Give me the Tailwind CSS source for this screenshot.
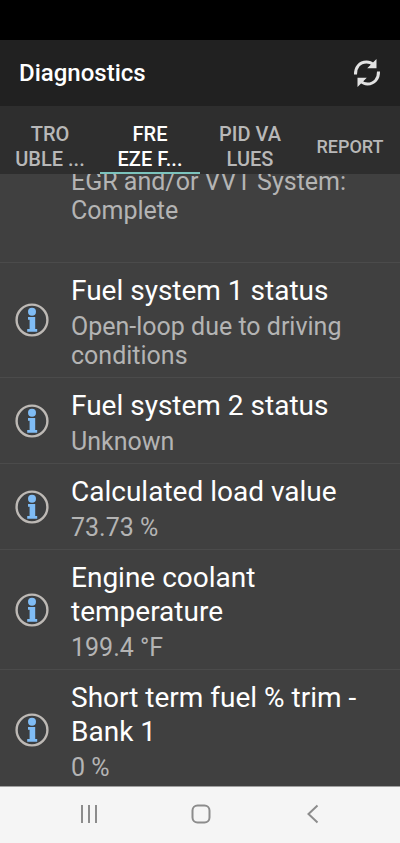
<!DOCTYPE html>
<html lang="en">
<head>
<meta charset="utf-8">
<meta name="viewport" content="width=device-width, initial-scale=1">
<title>Diagnostics</title>
<script src="https://cdn.jsdelivr.net/npm/@tailwindcss/browser@4"></script>
</head>
<body class="flex h-screen flex-col overflow-hidden bg-[#404040] font-['Roboto',sans-serif] text-white">
<svg class="hidden" aria-hidden="true">
  <symbol id="info" viewBox="0 0 34 34">
    <circle cx="17" cy="17" r="15.400" fill="#3c3e40" stroke="#bdb9b5" stroke-width="2.400"/>
    <circle cx="17" cy="8.800" r="4" fill="#7fbcf5"/>
    <path d="M13 14h7.200v12h2v2.800H12.200v-2.800h2.400v-9.200H13z" fill="#7fbcf5"/>
  </symbol>
</svg>

<div class="h-10 shrink-0 bg-black"></div>

<header class="flex h-[66px] shrink-0 items-center justify-between bg-[#212121] px-[19px]">
  <h1 class="text-[24px] leading-[28px] font-medium">Diagnostics</h1>
  <button aria-label="Refresh">
    <svg class="size-7" viewBox="0 0 28 28" fill="none" stroke="#e2e2e2" stroke-width="3">
      <path d="M2.500 15.500C2.200 8.500 6.500 3 13.500 3c2.600 0 5 .9 6.800 2.700"/>
      <path d="M25.500 12.500C25.800 19.500 21.500 25 14.500 25c-2.600 0-5-.9-6.800-2.700"/>
      <path d="M23.500 0v9.300h-9.300zM4.500 28v-9.300h9.300z" fill="#e2e2e2" stroke="none"/>
    </svg>
  </button>
</header>

<nav class="grid h-[68px] shrink-0 grid-cols-4 bg-[#2e2e2e] text-[20px] leading-[25px] font-medium text-[#b8b8b8]" aria-label="Sections">
  <button class="border-b-2 border-transparent pt-[15px]">TRO<br>UBLE ...</button>
  <button class="border-b-2 border-[#7cc4bd] pt-[15px] text-white" aria-current="page">FRE<br>EZE F...</button>
  <button class="border-b-2 border-transparent pt-[15px]">PID VA<br>LUES</button>
  <button class="border-b-2 border-transparent pt-[15px] text-[18px]">REPORT</button>
</nav>

<main class="min-h-0 flex-1 overflow-hidden">
  <ul class="-mt-[7px] text-[25px] leading-[29px] text-[#b4b4b4]">
    <li class="border-b border-[#4b4b4b] pr-4 pb-2 pl-[71px]">
      <p>EGR and/or VVT System: Complete<br>&nbsp;</p>
    </li>
    <li class="flex items-center gap-[22px] border-b border-[#4b4b4b] pt-[11px] pr-4 pb-[7px] pl-[15px]">
      <svg class="mb-1 size-[34px] shrink-0" role="img" aria-label="Info"><use href="#info"/></svg>
      <div><h2 class="mb-1 text-[28px] leading-[34px] text-white">Fuel system 1 status</h2><p>Open-loop due to driving conditions</p></div>
    </li>
    <li class="flex items-center gap-[22px] border-b border-[#4b4b4b] pt-[11px] pr-4 pb-[7px] pl-[15px]">
      <svg class="mb-1 size-[34px] shrink-0" role="img" aria-label="Info"><use href="#info"/></svg>
      <div><h2 class="mb-1 text-[28px] leading-[34px] text-white">Fuel system 2 status</h2><p>Unknown</p></div>
    </li>
    <li class="flex items-center gap-[22px] border-b border-[#4b4b4b] pt-[11px] pr-4 pb-[7px] pl-[15px]">
      <svg class="mb-1 size-[34px] shrink-0" role="img" aria-label="Info"><use href="#info"/></svg>
      <div><h2 class="mb-1 text-[28px] leading-[34px] text-white">Calculated load value</h2><p>73.73 %</p></div>
    </li>
    <li class="flex items-center gap-[22px] border-b border-[#4b4b4b] pt-[11px] pr-4 pb-[7px] pl-[15px]">
      <svg class="mb-1 size-[34px] shrink-0" role="img" aria-label="Info"><use href="#info"/></svg>
      <div><h2 class="mb-1 text-[28px] leading-[34px] text-white">Engine coolant<br>temperature</h2><p>199.4 °F</p></div>
    </li>
    <li class="flex items-center gap-[22px] pt-[11px] pr-4 pb-[7px] pl-[15px]">
      <svg class="mb-1 size-[34px] shrink-0" role="img" aria-label="Info"><use href="#info"/></svg>
      <div><h2 class="mb-1 text-[28px] leading-[34px] text-white">Short term fuel % trim - Bank 1</h2><p>0 %</p></div>
    </li>
  </ul>
</main>

<footer class="flex h-[57px] shrink-0 items-center justify-between border-t border-[#a0a0a0] bg-[#f5f5f5] pr-[74px] pb-[2px] pl-[76px]">
  <button aria-label="Recent apps"><svg class="size-[26px]" viewBox="0 0 26 26" stroke="#8c8c8c" stroke-width="2"><path d="M6 4v18M13 4v18M20 4v18"/></svg></button>
  <button aria-label="Home"><svg class="size-[26px]" viewBox="0 0 26 26" fill="none" stroke="#8c8c8c" stroke-width="2"><rect x="4.500" y="4.500" width="17" height="17" rx="5"/></svg></button>
  <button aria-label="Back"><svg class="size-[26px]" viewBox="0 0 26 26" fill="none" stroke="#8c8c8c" stroke-width="2"><path d="M17.500 4.500L8.500 13l9 8.500"/></svg></button>
</footer>
</body>
</html>
